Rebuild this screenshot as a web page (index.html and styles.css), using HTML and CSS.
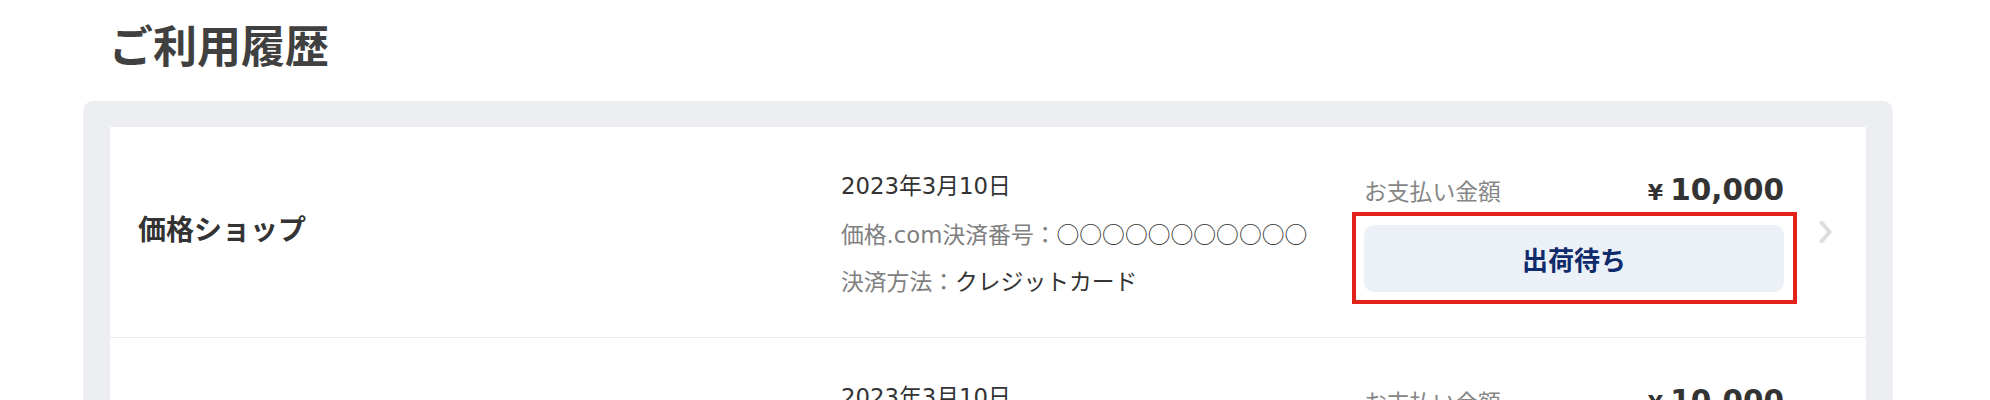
FILE: index.html
```html
<!DOCTYPE html>
<html lang="ja">
<head>
<meta charset="utf-8">
<title>ご利用履歴</title>
<link rel="stylesheet" href="styles.css">
</head>
<body>
<main class="page">
  <h1 class="title">ご利用履歴</h1>
  <section class="panel">
    <ul class="list">
      <li class="item">
        <div class="shop">価格ショップ</div>
        <div class="detail">
          <p class="line">2023年3月10日</p>
          <p class="line"><span class="label">価格.com決済番号：</span><span class="mark">○○○○○○○○○○○</span></p>
          <p class="line"><span class="label">決済方法：</span>クレジットカード</p>
        </div>
        <div class="summary">
          <div class="amount">
            <span class="amount-label">お支払い金額</span>
            <span class="price"><span class="yen">¥</span>10,000</span>
          </div>
          <div class="status is-marked">出荷待ち</div>
        </div>
        <svg class="chevron" width="14" height="26" viewBox="0 0 14 26" aria-hidden="true"><polyline points="2.5,2.5 11.5,13 2.5,23.5" fill="none" stroke="#dddddd" stroke-width="4"/></svg>
      </li>
      <li class="item">
        <div class="shop">価格ショップ</div>
        <div class="detail">
          <p class="line">2023年3月10日</p>
          <p class="line"><span class="label">価格.com決済番号：</span><span class="mark">○○○○○○○○○○○</span></p>
          <p class="line"><span class="label">決済方法：</span>クレジットカード</p>
        </div>
        <div class="summary">
          <div class="amount">
            <span class="amount-label">お支払い金額</span>
            <span class="price"><span class="yen">¥</span>10,000</span>
          </div>
          <div class="status">出荷待ち</div>
        </div>
        <svg class="chevron" width="14" height="26" viewBox="0 0 14 26" aria-hidden="true"><polyline points="2.5,2.5 11.5,13 2.5,23.5" fill="none" stroke="#dddddd" stroke-width="4"/></svg>
      </li>
    </ul>
  </section>
</main>
</body>
</html>
```
FILE: styles.css
```css
html, body {
  margin: 0;
  padding: 0;
  background: #ffffff;
}

body {
  font-family: "DejaVu Sans", "Noto Sans CJK JP", sans-serif;
  color: #333333;
}

.page {
  margin-left: 83px;
  width: 1810px;
}

.title {
  margin: 14px 0 27px 26px;
  font-family: "Noto Sans CJK JP", sans-serif;
  font-size: 44px;
  line-height: 60px;
  font-weight: 700;
  color: #404040;
}

.panel {
  background: #edeef2;
  border-radius: 10px 10px 0 0;
  padding: 26px 27px;
}

.list {
  list-style: none;
  margin: 0;
  padding: 0;
  background: #ffffff;
}

.item {
  display: flex;
  align-items: flex-start;
  box-sizing: border-box;
  height: 211px;
  padding-left: 28px;
  border-bottom: 1px solid #e8e9ec;
}

.shop {
  flex: 0 0 703px;
  align-self: center;
  margin-bottom: 9px;
  font-family: "Noto Sans CJK JP", sans-serif;
  font-size: 28px;
  line-height: 40px;
  font-weight: 700;
  color: #333333;
}

.detail {
  flex: 0 0 523px;
  padding-top: 36px;
  font-size: 22.8px;
}

.line {
  margin: 0;
  line-height: 47px;
  color: #333333;
  white-space: nowrap;
}

.label {
  color: #808080;
}

.mark {
  font-family: "Noto Sans CJK JP", sans-serif;
}

.summary {
  flex: 0 0 420px;
  padding-top: 41px;
}

.amount {
  display: flex;
  justify-content: space-between;
  align-items: baseline;
  height: 46px;
  margin-bottom: 11px;
}

.amount-label {
  font-size: 22.8px;
  line-height: 44px;
  color: #858585;
}

.price {
  font-family: "DejaVu Sans", sans-serif;
  font-size: 29.5px;
  line-height: 44px;
  font-weight: 700;
  color: #333333;
}

.yen {
  font-size: 22px;
  margin-right: 7px;
}

.status {
  position: relative;
  display: flex;
  align-items: center;
  justify-content: center;
  height: 67px;
  border-radius: 10px;
  background: #ecf1f8;
  font-family: "Noto Sans CJK JP", sans-serif;
  font-size: 26px;
  font-weight: 700;
  color: #0f2b6c;
}

.status.is-marked::after {
  content: "";
  position: absolute;
  top: -13px;
  left: -12px;
  right: -13px;
  bottom: -12px;
  border: 4px solid #e2231a;
}

.chevron {
  flex: 0 0 14px;
  align-self: center;
  margin-left: 34px;
}
```
